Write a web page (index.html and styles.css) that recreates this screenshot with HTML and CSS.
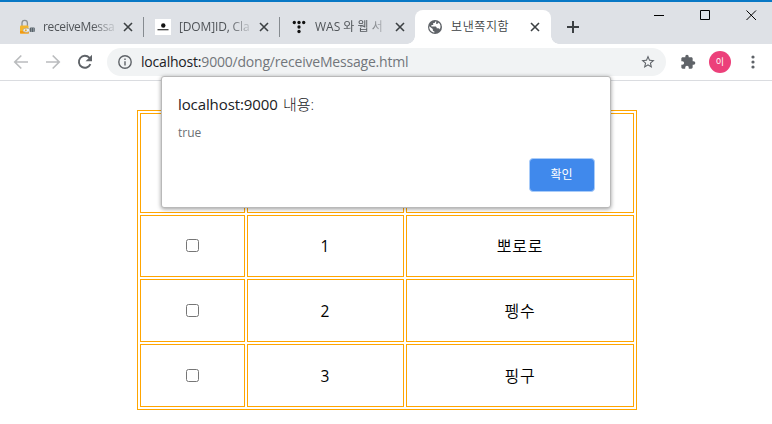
FILE: index.html
```html
<!DOCTYPE html>
<html lang="ko">
<head>
<meta charset="utf-8">
<title>보낸쪽지함</title>
<link rel="stylesheet" href="styles.css">
</head>
<body>
<div class="window">
  <header class="tabstrip">
    <div class="tab tab-one">
      <svg class="favicon" viewBox="0 0 16 16"><path d="M3 7V4a2.700 2.700 0 0 1 5.400 0v3" fill="none" stroke="#8b8f91" stroke-width="1.300"/><rect x="1" y="6.500" width="8.500" height="8" rx="1" fill="#f4b52c"/><path d="M1 12h9v2.500H1z" fill="#f39a12"/><ellipse cx="7.500" cy="11.200" rx="3.500" ry="2" fill="#e8edf0" stroke="#a9a28d" stroke-width=".6"/><circle cx="6.800" cy="11.200" r="1" fill="#e9a72a"/><rect x="10.800" y="8.500" width="5" height="4.500" rx="1" fill="#59636b"/><path d="M12.500 8.500v4.500M14.500 8.500v4.500" stroke="#99a3aa" stroke-width=".7"/></svg>
      <span class="tab-title title-one">receiveMessa</span>
      <svg class="close" viewBox="0 0 10 10"><path d="M1 1l8 8M9 1L1 9"/></svg>
    </div>
    <div class="tab tab-two">
      <svg class="favicon" viewBox="0 0 16 16"><path fill="#fff" d="M0 0h16v16H0z"/><circle cx="8.300" cy="6.500" r="2.200" fill="#111"/><path d="M2.500 10.700h11" stroke="#333" stroke-width="1.200"/></svg>
      <span class="tab-title title-two">[DOM]ID, Cla</span>
      <svg class="close" viewBox="0 0 10 10"><path d="M1 1l8 8M9 1L1 9"/></svg>
    </div>
    <div class="tab tab-three">
      <svg class="favicon" viewBox="0 0 16 16" fill="#111"><circle cx="3.300" cy="3.500" r="1.650"/><circle cx="8" cy="3.500" r="1.650"/><circle cx="12.700" cy="3.500" r="1.650"/><circle cx="8" cy="8" r="1.650"/><circle cx="8" cy="12.500" r="1.650"/></svg>
      <span class="tab-title title-three">WAS 와 웹 서</span>
      <svg class="close" viewBox="0 0 10 10"><path d="M1 1l8 8M9 1L1 9"/></svg>
    </div>
    <div class="tab tab-active">
      <svg class="favicon" viewBox="0 0 16 16"><circle cx="8" cy="8" r="7" fill="#5f6368"/><path d="M9.200 2.200c-1 .3-1.500 1-1.500 1.800H6.200v1.900H4.400v1.600H8c1.400 0 1.700.6 1.700 1.800h1.500c.8 0 1.300.4 1.500 1.100A5.800 5.800 0 0 0 11.600 3.500c-.1 1-1 1.500-2.400 1.400zM2.300 7.300c-.4 3.200 1.800 5.800 5 6.400v-1.500c-.9 0-1.500-.5-1.500-1.500v-.8z" fill="#fff"/></svg>
      <span class="tab-title title-active">보낸쪽지함</span>
      <svg class="close" viewBox="0 0 10 10"><path d="M1 1l8 8M9 1L1 9"/></svg>
    </div>
    <svg class="plus" viewBox="0 0 12 12"><path d="M6 0v12M0 6h12"/></svg>
    <div class="controls">
      <svg viewBox="0 0 11 11"><path d="M0 5.500h10"/></svg>
      <svg viewBox="0 0 11 11"><path d="M.5.500h9v9h-9z"/></svg>
      <svg viewBox="0 0 11 11"><path d="M.5.500l9.500 9.500M10 .5L.5 10"/></svg>
    </div>
  </header>
  <nav class="toolbar">
    <svg class="nav-icon faded" viewBox="0 0 16 16"><path d="M15 8H2M8.300 1.500L1.800 8l6.500 6.500"/></svg>
    <svg class="nav-icon faded" viewBox="0 0 16 16"><path d="M1 8h13M7.700 1.500L14.200 8l-6.500 6.500"/></svg>
    <svg class="nav-icon reload" viewBox="0 0 16 16"><path d="M13.400 10.200A6 6 0 1 1 12.300 3.700L13.500 5"/><path d="M15 .8v6.400H8.600z" class="solid"/></svg>
    <div class="omnibox">
      <svg class="info" viewBox="0 0 14 14"><circle cx="7" cy="7" r="6.200"/><path d="M7 6.200v4.300M7 3.500v1.500"/></svg>
      <span class="url"><b>localhost:</b>9000/dong/receiveMessage.html</span>
      <svg class="star" viewBox="0 0 24 24"><path d="M22 9.240l-7.190-.62L12 2 9.190 8.630 2 9.240l5.460 4.730L5.820 21 12 17.270 18.180 21l-1.630-7.030L22 9.240zM12 15.400l-3.760 2.270 1-4.280-3.320-2.880 4.380-.38L12 6.100l1.710 4.040 4.380.38-3.320 2.880 1 4.280L12 15.400z"/></svg>
    </div>
    <svg class="puzzle" viewBox="0 0 24 24"><path d="M20.500 11H19V7c0-1.100-.9-2-2-2h-4V3.500a2.500 2.500 0 0 0-5 0V5H4c-1.100 0-2 .9-2 2v3.800h1.500a2.700 2.700 0 0 1 0 5.400H2V20c0 1.100.9 2 2 2h3.800v-1.500a2.700 2.700 0 0 1 5.400 0V22H17c1.100 0 2-.9 2-2v-4h1.500a2.500 2.500 0 0 0 0-5z"/></svg>
    <span class="avatar">이</span>
    <svg class="menu" viewBox="0 0 4 14"><circle cx="2" cy="2" r="1.600"/><circle cx="2" cy="7" r="1.600"/><circle cx="2" cy="12" r="1.600"/></svg>
  </nav>
  <main class="page">
    <div class="table">
      <div class="cell"></div><div class="cell"></div><div class="cell"></div>
      <div class="cell first-check"><input type="checkbox"></div><div class="cell number">1</div><div class="cell name">뽀로로</div>
      <div class="cell"><input type="checkbox"></div><div class="cell number">2</div><div class="cell name">펭수</div>
      <div class="cell"><input type="checkbox"></div><div class="cell number">3</div><div class="cell name">핑구</div>
    </div>
  </main>
  <section class="dialog">
    <h1>localhost:9000 <span>내용:</span></h1>
    <p>true</p>
    <button>확인</button>
  </section>
</div>
</body>
</html>
```
FILE: styles.css
```css
* { box-sizing: border-box; }
body { margin: 0; font-family: "Open Sans", "Noto Sans CJK KR", sans-serif; font-weight: 400; color: #000; background: #fff; }
svg { display: block; flex: none; }
.window { position: relative; width: 772px; height: 424px; overflow: hidden; }

.tabstrip { display: flex; align-items: flex-end; height: 44px; background: #dee1e6; border-top: 2px solid #0878c5; }
.tab { display: flex; align-items: center; height: 34px; flex: none; position: relative; }
.tab-one { width: 144px; padding-left: 19px; }
.tab-two { width: 136px; padding-left: 11px; }
.tab-three { width: 135px; padding-left: 11px; }
.tab-active { width: 136px; padding-left: 12px; background: #fff; border-radius: 8px 8px 0 0; }
.tab-one::after, .tab-two::after { content: ""; position: absolute; right: 0; top: 7px; width: 1px; height: 20px; background: #868b90; }
.tab-active::before, .tab-active::after { content: ""; position: absolute; bottom: 0; width: 8px; height: 8px; }
.tab-active::before { left: -8px; background: radial-gradient(circle at 0 0, #dee1e6 7.5px, #fff 8px); }
.tab-active::after { right: -8px; background: radial-gradient(circle at 100% 0, #dee1e6 7.5px, #fff 8px); }
.favicon { width: 16px; height: 16px; }
.tab-title { margin-left: 8px; width: 72px; font-size: 12px; line-height: 18px; color: #505458; white-space: nowrap; -webkit-mask-image: linear-gradient(90deg, #000 68%, rgba(0, 0, 0, .15)); mask-image: linear-gradient(90deg, #000 68%, rgba(0, 0, 0, .15)); }
.title-one { letter-spacing: -.35px; }
.title-two { letter-spacing: -.15px; }
.title-active { color: #3c4043; font-weight: 350; letter-spacing: .6px; -webkit-mask-image: none; mask-image: none; }
.close { width: 10px; height: 10px; margin-left: 8px; fill: none; stroke: #3c4043; stroke-width: 1.6; }
.tab-active .close { margin-left: 7px; }
.plus { width: 12px; height: 12px; margin: 0 0 11px 16px; stroke: #3c4043; stroke-width: 2; }
.controls { display: flex; gap: 35px; margin: 0 5px 23px auto; padding-right: 10px; }
.controls svg { width: 11px; height: 11px; fill: none; stroke: #000; stroke-width: 1; }

.toolbar { display: flex; align-items: center; height: 37px; border-bottom: 1px solid #dadce0; padding-left: 13px; background: #fff; }
.nav-icon { width: 16px; height: 16px; margin-right: 16px; fill: none; stroke: #5f6368; stroke-width: 1.9; }
.faded { stroke: #babcbe; stroke-width: 1.7; }
.reload { margin-right: 14px; }
.reload .solid { fill: #5f6368; stroke: none; }
.omnibox { display: flex; align-items: center; width: 559px; height: 28px; padding: 0 10px 0 11px; border-radius: 14px; background: #f1f3f4; }
.info { width: 14px; height: 14px; fill: none; stroke: #5f6368; stroke-width: 1.4; }
.url { margin-left: 9px; font-size: 14px; line-height: 20px; color: #72767b; letter-spacing: -.2px; white-space: nowrap; }
.url b { font-weight: 400; color: #202124; }
.star { width: 16px; height: 16px; margin-left: auto; fill: #5f6368; }
.puzzle { width: 16px; height: 16px; margin-left: 14px; fill: #5f6368; }
.avatar { width: 22px; height: 22px; margin-left: 13px; border-radius: 50%; background: #ec407a; color: #fff; font-size: 9px; line-height: 21px; text-align: center; }
.menu { width: 4px; height: 14px; margin-left: 20px; fill: #5f6368; }

.page { padding: 29px 0 0 137px; }
.table { display: grid; grid-template-columns: 105px 157px 228px; grid-template-rows: 100px 62px 63px 63px; gap: 2px; width: 500px; height: 300px; padding: 2px; border: 1px solid #ffa500; }
.cell { display: flex; align-items: center; justify-content: center; border: 1px solid #ffa500; font-size: 16px; line-height: 22px; }
.number { padding-right: 1px; font-size: 15.5px; }
.name { font-weight: 350; letter-spacing: .8px; }
.first-check { padding-bottom: 1px; }
.cell input { width: 13px; height: 13px; margin: 0; }

.dialog { position: absolute; left: 161px; top: 76px; width: 450px; height: 132px; padding: 17px 15px 15px 16px; background: #fff; border: 1px solid #b9b9b9; border-radius: 3px; box-shadow: 0 1px 4px rgba(0, 0, 0, .4); display: flex; flex-direction: column; }
.dialog h1 { margin: 0; font-size: 15px; line-height: 20px; font-weight: 400; letter-spacing: -.1px; word-spacing: 1.5px; color: #202124; }
.dialog h1 span { font-weight: 300; }
.dialog p { margin: 10px 0 0; font-size: 12px; line-height: 18px; color: #6b6f74; }
.dialog button { align-self: flex-end; width: 66px; height: 34px; margin-top: auto; padding: 0 1px 2px 0; border: 1px solid #a9ccf9; border-radius: 4px; background: #4089ec; color: #fff; font: 400 12px/18px "Noto Sans CJK KR", sans-serif; }
```
